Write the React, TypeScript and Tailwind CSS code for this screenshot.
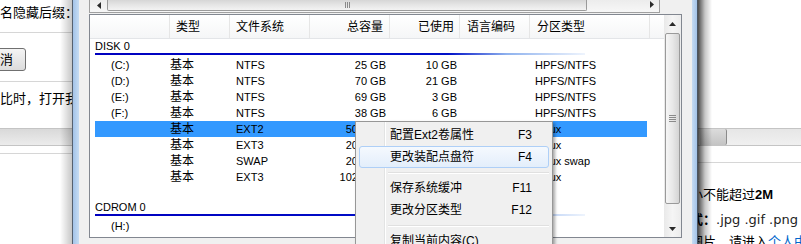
import React from "react";

type Row = {
  dev: string;
  kind: string;
  fs: string;
  total: string;
  used: string;
  ptype: string;
  selected?: boolean;
};

const DISK_ROWS: Row[] = [
  { dev: "(C:)", kind: "基本", fs: "NTFS", total: "25 GB", used: "10 GB", ptype: "HPFS/NTFS" },
  { dev: "(D:)", kind: "基本", fs: "NTFS", total: "70 GB", used: "21 GB", ptype: "HPFS/NTFS" },
  { dev: "(E:)", kind: "基本", fs: "NTFS", total: "69 GB", used: "3 GB", ptype: "HPFS/NTFS" },
  { dev: "(F:)", kind: "基本", fs: "NTFS", total: "38 GB", used: "6 GB", ptype: "HPFS/NTFS" },
  { dev: "", kind: "基本", fs: "EXT2", total: "50.0 GB", used: "", ptype: "Linux", selected: true },
  { dev: "", kind: "基本", fs: "EXT3", total: "20.0 GB", used: "", ptype: "Linux" },
  { dev: "", kind: "基本", fs: "SWAP", total: "20.0 GB", used: "", ptype: "Linux swap" },
  { dev: "", kind: "基本", fs: "EXT3", total: "102.0 GB", used: "", ptype: "Linux" },
];

const MENU = [
  { label: "配置Ext2卷属性", key: "F3" },
  { label: "更改装配点盘符", key: "F4", hot: true },
  { sep: true },
  { label: "保存系统缓冲", key: "F11" },
  { label: "更改分区类型", key: "F12" },
  { sep: true },
  { label: "复制当前内容(C)", key: "" },
];

function DiskRow({ row }: { row: Row }) {
  return (
    <div
      className={`ml-[5px] flex h-[16px] w-[552px] shrink-0 items-center leading-[16px] ${
        row.selected ? "bg-[#3399ff]" : ""
      }`}
    >
      <span className="w-[75px] pl-[16px]">{row.dev}</span>
      <span className="w-[60px] text-[12px]">{row.kind}</span>
      <span className="w-[80px] pl-[6px]">{row.fs}</span>
      <span className="w-[80px] pr-[4px] text-right">{row.total}</span>
      <span className="w-[70px] pr-[3px] text-right">{row.used}</span>
      <span className="w-[70px]" />
      <span className="w-[117px] pl-[5px]">{row.ptype}</span>
    </div>
  );
}

function GroupHeader({ label, top }: { label: string; top?: boolean }) {
  return (
    <div className={`ml-[5px] w-[490px] shrink-0 ${top ? "" : "mt-[15px]"}`}>
      <div className="h-[14px] leading-[14px]">{label}</div>
      <div className="h-[2px] bg-[linear-gradient(to_right,#0000c0_0%,#0010c8_72%,#8fb2ee_84%,#eef4fd_100%)]" />
      <div className="h-[2px]" />
    </div>
  );
}

function Arrow({ dir }: { dir: "up" | "down" | "left" | "right" }) {
  const pts = {
    up: "0,4 7,4 3.5,0",
    down: "0,0 7,0 3.5,4",
    left: "4,0 4,7 0,3.5",
    right: "0,0 0,7 4,3.5",
  }[dir];
  const vertical = dir === "up" || dir === "down";
  return (
    <svg width={vertical ? 7 : 4} height={vertical ? 4 : 7} viewBox={vertical ? "0 0 7 4" : "0 0 4 7"}>
      <polygon points={pts} fill="#2a2a2a" />
    </svg>
  );
}

function ListView() {
  return (
    <div className="flex h-[224px] shrink-0 border border-[#828790] bg-white text-[11px] text-black">
      <div className="flex w-[574px] flex-col">
        {/* Column header */}
        <div className="flex h-[24px] shrink-0 items-center border-b border-[#e3e5e8] bg-gradient-to-b from-white to-[#f5f6f7] text-[12px]">
          <span className="h-full w-[80px] border-r border-[#e6e6e6]" />
          <span className="flex h-full w-[60px] items-center border-r border-[#e6e6e6] pl-[6px]">类型</span>
          <span className="flex h-full w-[80px] items-center border-r border-[#e6e6e6] pl-[6px]">文件系统</span>
          <span className="flex h-full w-[80px] items-center justify-end border-r border-[#e6e6e6] pr-[6px]">总容量</span>
          <span className="flex h-full w-[70px] items-center justify-end border-r border-[#e6e6e6] pr-[5px]">已使用</span>
          <span className="flex h-full w-[70px] items-center border-r border-[#e6e6e6] pl-[7px]">语言编码</span>
          <span className="flex h-full w-[120px] items-center border-r border-[#e6e6e6] pl-[7px]">分区类型</span>
          <span className="h-full flex-1" />
        </div>

        {/* Body */}
        <GroupHeader label="DISK 0" top />
        {DISK_ROWS.map((r, i) => (
          <DiskRow key={i} row={r} />
        ))}
        <GroupHeader label="CDROM 0" />
        <DiskRow row={{ dev: "(H:)", kind: "", fs: "", total: "", used: "", ptype: "" }} />
      </div>

      {/* Vertical scrollbar */}
      <div className="flex w-[17px] flex-col bg-gradient-to-r from-[#e9e9e9] via-[#f5f5f5] to-[#ececec]">
        <div className="flex h-[17px] items-center justify-center">
          <Arrow dir="up" />
        </div>
        <div className="mx-[1px] mt-[1px] flex h-[171px] items-center justify-center rounded-[2px] border border-[#9a9a9a] bg-gradient-to-r from-[#f6f6f6] via-[#e8e8e8] to-[#d4d4d4]">
          <div className="flex flex-col gap-[1px]">
            <div className="h-[1px] w-[7px] bg-[#8a8a8a]" />
            <div className="h-[1px] w-[7px] bg-[#8a8a8a]" />
            <div className="h-[1px] w-[7px] bg-[#8a8a8a]" />
            <div className="h-[1px] w-[7px] bg-[#8a8a8a]" />
          </div>
        </div>
        <div className="flex-1" />
        <div className="flex h-[17px] items-center justify-center">
          <Arrow dir="down" />
        </div>
      </div>
    </div>
  );
}

function TopScrollbar() {
  return (
    <div className="flex h-[13px] w-[571px] shrink-0 border-x border-b border-[#a0a0a0] bg-gradient-to-b from-[#ececec] to-[#f7f7f7]">
      <div className="flex w-[17px] items-start justify-center pt-[2px]">
        <Arrow dir="left" />
      </div>
      <div className="flex h-[11px] w-[480px] items-center justify-center rounded-b-[2px] border-x border-b border-[#9a9a9a] bg-gradient-to-b from-[#d6d6d6] via-[#e6e6e6] to-[#f3f3f3]">
        <div className="flex gap-[1px]">
          <div className="h-[6px] w-[1px] bg-[#8a8a8a]" />
          <div className="h-[6px] w-[1px] bg-[#8a8a8a]" />
          <div className="h-[6px] w-[1px] bg-[#8a8a8a]" />
        </div>
      </div>
      <div className="flex-1" />
      <div className="flex w-[14px] items-start justify-center pt-[1px]">
        <Arrow dir="right" />
      </div>
    </div>
  );
}

function ContextMenu() {
  return (
    <div className="absolute left-[355px] top-[121px] w-[198px] border border-[#979797] bg-[#f0f0f0] pt-[2px] text-[12px] text-black shadow-[2px_2px_3px_rgba(0,0,0,0.35)]">
      <div className="absolute bottom-0 left-[28px] top-0 w-[2px] border-l border-[#e2e3e3] bg-white" />
      <div className="relative flex flex-col pb-[4px]">
        {MENU.map((m, i) =>
          m.sep ? (
            <div key={i} className="mx-[3px] flex h-[9px] flex-col justify-center pl-[29px]">
              <div className="h-[1px] bg-[#e0e0e0]" />
              <div className="h-[1px] bg-white" />
            </div>
          ) : (
            <div
              key={i}
              className={`mx-[3px] flex h-[22px] items-center justify-between rounded-[3px] border pl-[30px] pr-[16px] ${
                m.hot
                  ? "border-[#aecff7] bg-gradient-to-b from-[#f5f9fe] to-[#e3eefb]"
                  : "border-transparent"
              }`}
            >
              <span>{m.label}</span>
              <span>{m.key}</span>
            </div>
          )
        )}
      </div>
    </div>
  );
}

function AppWindow() {
  return (
    <div className="absolute left-[60px] top-0 flex h-[244px]">
      {/* left shadow + frame */}
      <div className="w-[12px] bg-gradient-to-r from-transparent to-[rgba(0,0,0,0.22)]" />
      <div className="w-[1px] bg-[#55606e]" />
      <div className="w-[6px] bg-gradient-to-r from-[#a3c3e8] to-[#c6dcf3]" />
      <div className="w-[10px] bg-[#f0f0f0]" />

      {/* client area */}
      <div className="flex w-[593px] flex-col bg-[#f0f0f0]">
        <TopScrollbar />
        <div className="h-[1px] shrink-0" />
        <ListView />
      </div>

      {/* right frame + shadow */}
      <div className="w-[10px] bg-[#f0f0f0]" />
      <div className="w-[5px] bg-gradient-to-r from-[#c6dcf3] to-[#a3c3e8]" />
      <div className="w-[1px] bg-[#4a5563]" />
      <div className="w-[14px] bg-gradient-to-r from-[rgba(0,0,0,0.7)] via-[rgba(0,0,0,0.22)] to-transparent" />
    </div>
  );
}

export default function App() {
  return (
    <div className="relative h-[244px] w-[801px] overflow-hidden bg-white font-['Liberation_Sans','Noto_Sans_CJK_SC',sans-serif] text-black">
      {/* page behind the window */}
      <div className="flex h-full">
        <div className="flex w-[80px] flex-col whitespace-nowrap text-[13px]">
          <div className="h-[33px] shrink-0 border-b border-[#d6d6d6] pt-[4px] leading-[18px]">名隐藏后缀：</div>
          <div className="h-[49px] shrink-0 border-b border-[#d6d6d6] pt-[15px]">
            <div className="-ml-[40px] flex h-[23px] w-[66px] items-center justify-end rounded-[3px] border border-[#707070] bg-gradient-to-b from-[#f4f4f4] to-[#dcdcdc] pr-[12px]">
              取消
            </div>
          </div>
          <div className="h-[46px] shrink-0 pt-[8px] leading-[18px]">比时，打开我的</div>
          <div className="h-[18px] shrink-0 border-y border-[#c4c4c4] bg-gradient-to-b from-[#d9d9d9] to-[#ececec]" />
          <div className="h-[8px] shrink-0 border-b border-[#d6d6d6]" />
        </div>
        <div className="flex-1" />
        <div className="flex w-[111px] flex-col whitespace-nowrap text-[13px]">
          <div className="h-[128px] shrink-0" />
          <div className="flex h-[18px] shrink-0 border-y border-[#c4c4c4] bg-gradient-to-b from-[#e6e6e6] to-[#f0f0f0]">
            <div className="ml-[10px] h-full w-[27px] rounded-r-[2px] border-r border-[#8a8a8a] bg-gradient-to-b from-[#dcdcdc] to-[#c4c4c4]" />
          </div>
          <div className="h-[17px] shrink-0 border-b border-[#d6d6d6]" />
          <div className="mt-[23px] shrink-0 leading-[18px]">
            小不能超过<b>2M</b>
          </div>
          <div className="mt-[7px] shrink-0 leading-[18px]">
            <b>式：</b>
            <span className="font-['DejaVu_Sans',sans-serif] text-[13px] text-[#222]">.jpg .gif .png .bmp</span>
          </div>
          <div className="mt-[4px] shrink-0 leading-[18px]">
            图片，请进入<span className="text-[#0066cc]">个人中心</span>
          </div>
        </div>
      </div>

      <AppWindow />
      <ContextMenu />
    </div>
  );
}
